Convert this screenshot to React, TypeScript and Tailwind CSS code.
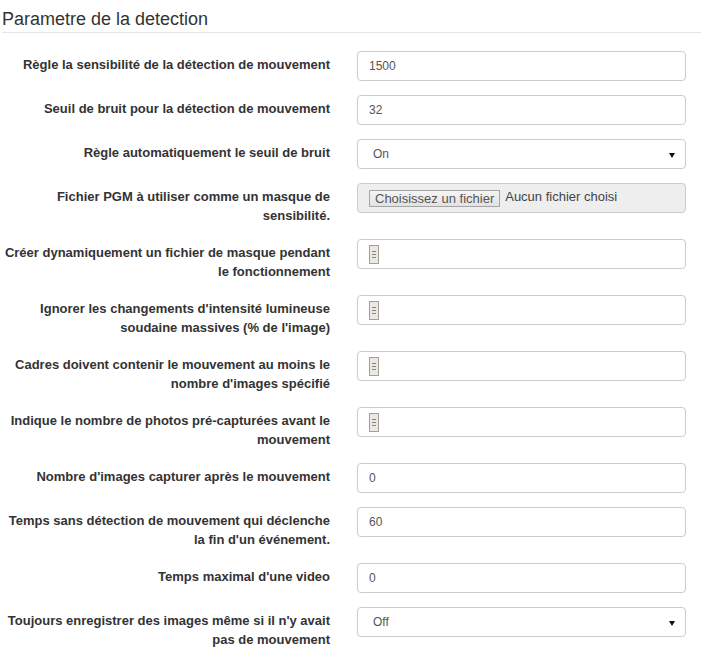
import { ReactNode } from 'react';

type Field =
  | { kind: 'text'; label: ReactNode; value: string }
  | { kind: 'select'; label: ReactNode; value: string }
  | { kind: 'file'; label: ReactNode }
  | { kind: 'empty'; label: ReactNode };

const FIELDS: Field[] = [
  { kind: 'text', label: 'Règle la sensibilité de la détection de mouvement', value: '1500' },
  { kind: 'text', label: 'Seuil de bruit pour la détection de mouvement', value: '32' },
  { kind: 'select', label: 'Règle automatiquement le seuil de bruit', value: 'On' },
  {
    kind: 'file',
    label: (
      <>
        Fichier PGM à utiliser comme un masque de
        <br />
        sensibilité.
      </>
    ),
  },
  {
    kind: 'empty',
    label: (
      <>
        Créer dynamiquement un fichier de masque pendant
        <br />
        le fonctionnement
      </>
    ),
  },
  {
    kind: 'empty',
    label: (
      <>
        Ignorer les changements d'intensité lumineuse
        <br />
        soudaine massives (% de l'image)
      </>
    ),
  },
  {
    kind: 'empty',
    label: (
      <>
        Cadres doivent contenir le mouvement au moins le
        <br />
        nombre d'images spécifié
      </>
    ),
  },
  {
    kind: 'empty',
    label: (
      <>
        Indique le nombre de photos pré-capturées avant le
        <br />
        mouvement
      </>
    ),
  },
  { kind: 'text', label: "Nombre d'images capturer après le mouvement", value: '0' },
  {
    kind: 'text',
    label: (
      <>
        Temps sans détection de mouvement qui déclenche
        <br />
        la fin d'un événement.
      </>
    ),
    value: '60',
  },
  { kind: 'text', label: "Temps maximal d'une video", value: '0' },
  {
    kind: 'select',
    label: (
      <>
        Toujours enregistrer des images même si il n'y avait
        <br />
        pas de mouvement
      </>
    ),
    value: 'Off',
  },
];

function BrokenIcon() {
  return (
    <svg width="10" height="19" viewBox="0 0 10 19">
      <rect x="0.5" y="0.5" width="9" height="18" fill="#ece9e4" stroke="#a19d98" />
      <path d="M3 6.5h4M3 9.5h4M3 12.5h4" stroke="#8a8580" strokeWidth="1" />
    </svg>
  );
}

function Control({ field }: { field: Field }) {
  const box = 'h-[30px] w-full rounded-[4px] border border-[#cccccc] text-[12px] text-[#555555]';

  if (field.kind === 'text') {
    return (
      <input
        readOnly
        value={field.value}
        className={`${box} bg-white px-[11px] outline-none`}
      />
    );
  }

  if (field.kind === 'select') {
    return (
      <div className="relative">
        <select
          value={field.value}
          onChange={() => {}}
          className={`${box} appearance-none bg-white pl-[15px] outline-none`}
        >
          <option value={field.value}>{field.value}</option>
        </select>
        <svg
          width="6"
          height="5"
          viewBox="0 0 6 5"
          className="absolute right-[11px] top-[14px] pointer-events-none"
        >
          <polygon points="0,0 6,0 3,5" fill="#111111" />
        </svg>
      </div>
    );
  }

  if (field.kind === 'file') {
    return (
      <div className={`${box} flex items-center bg-[#eeeeee] px-[11px]`}>
        <span className="flex h-[17px] items-center border border-[#a5a5a5] bg-[linear-gradient(#f4f4f4,#e2e2e2)] px-[5px] text-[13px] leading-none text-[#555555]">
          Choisissez un fichier
        </span>
        <span className="ml-[5px] -mt-[3px] text-[13px] leading-none text-[#444444]">
          Aucun fichier choisi
        </span>
      </div>
    );
  }

  return (
    <div className={`${box} flex items-center bg-white px-[11px]`}>
      <BrokenIcon />
    </div>
  );
}

export default function App() {
  return (
    <div
      className="w-[701px] bg-white text-[#333333]"
      style={{ fontFamily: '"Liberation Sans", Arial, sans-serif' }}
    >
      <h4 className="ml-[2px] mt-[9px] border-b border-[#e5e5e5] pb-[3px] text-[18px] font-normal leading-[20px]">
        Parametre de la detection
      </h4>

      <form className="mt-[18px]">
        {FIELDS.map((field, i) => (
          <div key={i} className="mb-[14px] flex items-start">
            <label className="w-[345px] shrink-0 whitespace-nowrap pr-[15px] pt-[5px] text-right text-[13px] font-bold leading-[18.5px]">
              {field.label}
            </label>
            <div className="flex-1 pl-[12px] pr-[15px]">
              <Control field={field} />
            </div>
          </div>
        ))}
      </form>
    </div>
  );
}
